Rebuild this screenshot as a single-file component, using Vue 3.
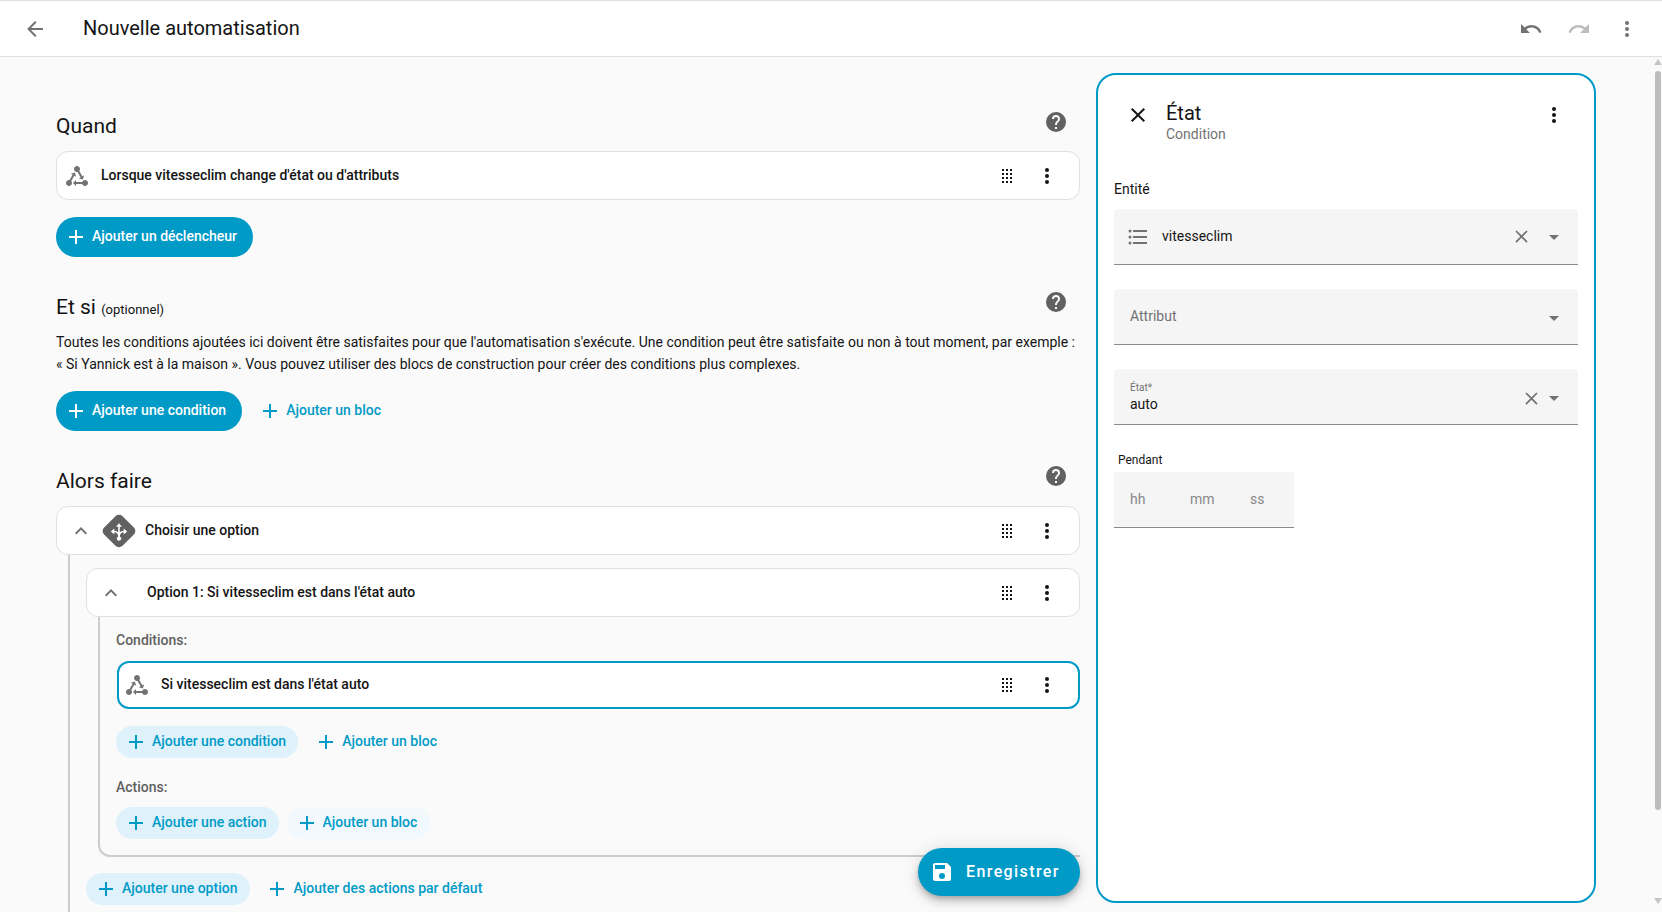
<script setup>
const p = {
  back: 'M20,11V13H8L13.5,18.5L12.08,19.92L4.16,12L12.08,4.08L13.5,5.5L8,11H20Z',
  undo: 'M12.5,8C9.85,8 7.45,9 5.6,10.6L2,7V16H11L7.38,12.38C8.77,11.22 10.54,10.5 12.5,10.5C16.04,10.5 19.05,12.81 20.1,16L22.47,15.22C21.08,11.03 17.15,8 12.5,8Z',
  redo: 'M18.4,10.6C16.55,9 14.15,8 11.5,8C6.85,8 2.92,11.03 1.54,15.22L3.9,16C4.95,12.81 7.95,10.5 11.5,10.5C13.45,10.5 15.23,11.22 16.62,12.38L13,16H22V7L18.4,10.6Z',
  dots: 'M12,16A2,2 0 0,1 14,18A2,2 0 0,1 12,20A2,2 0 0,1 10,18A2,2 0 0,1 12,16M12,10A2,2 0 0,1 14,12A2,2 0 0,1 12,14A2,2 0 0,1 10,12A2,2 0 0,1 12,10M12,4A2,2 0 0,1 14,6A2,2 0 0,1 12,8A2,2 0 0,1 10,6A2,2 0 0,1 12,4Z',
  help: 'M15.07,11.25L14.17,12.17C13.45,12.89 13,13.5 13,15H11V14.5C11,13.39 11.45,12.39 12.17,11.67L13.41,10.41C13.78,10.05 14,9.55 14,9C14,7.89 13.1,7 12,7A2,2 0 0,0 10,9H8A4,4 0 0,1 12,5A4,4 0 0,1 16,9C16,9.88 15.64,10.67 15.07,11.25M13,19H11V17H13M12,2A10,10 0 0,0 2,12A10,10 0 0,0 12,22A10,10 0 0,0 22,12C22,6.47 17.5,2 12,2Z',
  plus: 'M19,13H13V19H11V13H5V11H11V5H13V11H19V13Z',
  up: 'M7.41,15.41L12,10.83L16.59,15.41L18,14L12,8L6,14L7.41,15.41Z',
  close: 'M19,6.41L17.59,5L12,10.59L6.41,5L5,6.41L10.59,12L5,17.59L6.41,19L12,13.41L17.59,19L19,17.59L13.41,12L19,6.41Z',
  caret: 'M7,10L12,15L17,10H7Z',
  list: 'M7,5H21V7H7V5M7,13V11H21V13H7M4,4.5A1.5,1.5 0 0,1 5.5,6A1.5,1.5 0 0,1 4,7.5A1.5,1.5 0 0,1 2.5,6A1.5,1.5 0 0,1 4,4.5M4,10.5A1.5,1.5 0 0,1 5.5,12A1.5,1.5 0 0,1 4,13.5A1.5,1.5 0 0,1 2.5,12A1.5,1.5 0 0,1 4,10.5M7,19V17H21V19H7M4,16.5A1.5,1.5 0 0,1 5.5,18A1.5,1.5 0 0,1 4,19.5A1.5,1.5 0 0,1 2.5,18A1.5,1.5 0 0,1 4,16.5Z',
  state: 'M6.27 17.05C6.72 17.58 7 18.25 7 19C7 20.66 5.66 22 4 22S1 20.66 1 19 2.34 16 4 16C4.18 16 4.36 16 4.53 16.05L7.6 10.69L5.86 9.7L9.95 8.58L11.07 12.67L9.33 11.68L6.27 17.05M20 16C18.7 16 17.6 16.84 17.18 18H11V16L8 19L11 22V20H17.18C17.6 21.16 18.7 22 20 22C21.66 22 23 20.66 23 19S21.66 16 20 16M12 8C12.18 8 12.36 8 12.53 7.95L15.6 13.31L13.86 14.3L17.95 15.42L19.07 11.33L17.33 12.32L14.27 6.95C14.72 6.42 15 5.75 15 5C15 3.34 13.66 2 12 2S9 3.34 9 5 10.34 8 12 8Z',
  save: 'M15,9H5V5H15M12,19A3,3 0 0,1 9,16A3,3 0 0,1 12,13A3,3 0 0,1 15,16A3,3 0 0,1 12,19M17,3H5C3.89,3 3,3.9 3,5V19A2,2 0 0,0 5,21H19A2,2 0 0,0 21,19V7L17,3Z',
}
const dragDots = []
for (let r = 0; r < 4; r++) for (let c = 0; c < 3; c++) dragDots.push({ x: 7 + c * 4, y: 5 + r * 4 })
</script>

<template>
  <div class="page">
    <header class="topbar">
      <svg class="ic back" viewBox="0 0 24 24"><path :d="p.back" /></svg>
      <div class="title">Nouvelle automatisation</div>
      <svg class="ic undo" viewBox="0 0 24 24"><path :d="p.undo" /></svg>
      <svg class="ic redo" viewBox="0 0 24 24"><path :d="p.redo" /></svg>
      <svg class="ic more" viewBox="0 0 24 24"><path :d="p.dots" /></svg>
    </header>

    <div class="body">
      <main class="main">
        <div class="head h1">
          <h2>Quand</h2>
          <svg class="ic help hp1" viewBox="0 0 24 24"><path :d="p.help" /></svg>
        </div>
        <div class="card">
          <svg class="ic state" viewBox="0 0 24 24"><path :d="p.state" /></svg>
          <span class="card-text t-a">Lorsque vitesseclim change d'état ou d'attributs</span>
          <svg class="ic drag" viewBox="0 0 24 24"><rect v-for="(d, i) in dragDots" :key="i" :x="d.x" :y="d.y" width="2" height="2" /></svg>
          <svg class="ic dots" viewBox="0 0 24 24"><path :d="p.dots" /></svg>
        </div>
        <div class="row r1">
          <button class="btn solid"><svg viewBox="0 0 24 24"><path :d="p.plus" /></svg><span>Ajouter un déclencheur</span></button>
        </div>

        <div class="head h2">
          <h2>Et si <small>(optionnel)</small></h2>
          <svg class="ic help hp2" viewBox="0 0 24 24"><path :d="p.help" /></svg>
        </div>
        <p class="desc">Toutes les conditions ajoutées ici doivent être satisfaites pour que l'automatisation s'exécute. Une condition peut être satisfaite ou non à tout moment, par exemple : « Si Yannick est à la maison ». Vous pouvez utiliser des blocs de construction pour créer des conditions plus complexes.</p>
        <div class="row r2">
          <button class="btn solid"><svg viewBox="0 0 24 24"><path :d="p.plus" /></svg><span>Ajouter une condition</span></button>
          <button class="btn plain tall"><svg viewBox="0 0 24 24"><path :d="p.plus" /></svg><span>Ajouter un bloc</span></button>
        </div>

        <div class="head h3">
          <h2>Alors faire</h2>
          <svg class="ic help hp3" viewBox="0 0 24 24"><path :d="p.help" /></svg>
        </div>
        <div class="card">
          <svg class="ic chev" viewBox="0 0 24 24"><path :d="p.up" /></svg>
          <span class="choose">
            <svg viewBox="0 0 36 36">
              <rect x="5" y="5" width="26" height="26" rx="5" transform="rotate(45 18 18)" fill="#616161" />
              <path d="M18 26V13M18 24C18 20.5 16 18.5 13 18.5M18 24C18 20.5 20 18.5 23 18.5" fill="none" stroke="#fff" stroke-width="1.6" />
              <circle cx="18" cy="25.6" r="2.2" fill="#fff" />
              <path d="M18 10.2l3 3.5h-6zM9.8 18.5l3.5-3v6zM26.2 18.5l-3.5-3v6z" fill="#fff" />
            </svg>
          </span>
          <span class="card-text t-b">Choisir une option</span>
          <svg class="ic drag" viewBox="0 0 24 24"><rect v-for="(d, i) in dragDots" :key="i" :x="d.x" :y="d.y" width="2" height="2" /></svg>
          <svg class="ic dots" viewBox="0 0 24 24"><path :d="p.dots" /></svg>
        </div>

        <div class="choose-body">
          <div class="card option">
            <svg class="ic chev" viewBox="0 0 24 24"><path :d="p.up" /></svg>
            <span class="card-text t-c">Option 1: Si vitesseclim est dans l'état auto</span>
            <svg class="ic drag" viewBox="0 0 24 24"><rect v-for="(d, i) in dragDots" :key="i" :x="d.x" :y="d.y" width="2" height="2" /></svg>
            <svg class="ic dots" viewBox="0 0 24 24"><path :d="p.dots" /></svg>
          </div>
          <div class="option-body">
            <div class="sub-label l1">Conditions:</div>
            <div class="card selected">
              <svg class="ic state" viewBox="0 0 24 24"><path :d="p.state" /></svg>
              <span class="card-text t-d">Si vitesseclim est dans l'état auto</span>
              <svg class="ic drag" viewBox="0 0 24 24"><rect v-for="(d, i) in dragDots" :key="i" :x="d.x" :y="d.y" width="2" height="2" /></svg>
              <svg class="ic dots" viewBox="0 0 24 24"><path :d="p.dots" /></svg>
            </div>
            <div class="row r3">
              <button class="btn soft"><svg viewBox="0 0 24 24"><path :d="p.plus" /></svg><span>Ajouter une condition</span></button>
              <button class="btn plain"><svg viewBox="0 0 24 24"><path :d="p.plus" /></svg><span>Ajouter un bloc</span></button>
            </div>
            <div class="sub-label l2">Actions:</div>
            <div class="row r4">
              <button class="btn soft"><svg viewBox="0 0 24 24"><path :d="p.plus" /></svg><span>Ajouter une action</span></button>
              <button class="btn softer"><svg viewBox="0 0 24 24"><path :d="p.plus" /></svg><span>Ajouter un bloc</span></button>
            </div>
          </div>
          <div class="row r5">
            <button class="btn soft"><svg viewBox="0 0 24 24"><path :d="p.plus" /></svg><span>Ajouter une option</span></button>
            <button class="btn plain"><svg viewBox="0 0 24 24"><path :d="p.plus" /></svg><span>Ajouter des actions par défaut</span></button>
          </div>
        </div>
      </main>

      <aside class="panel">
        <div class="panel-head">
          <svg class="ic p-close" viewBox="0 0 24 24"><path :d="p.close" /></svg>
          <div class="panel-title">
            <div class="pt">État</div>
            <div class="ps">Condition</div>
          </div>
          <svg class="ic p-more" viewBox="0 0 24 24"><path :d="p.dots" /></svg>
        </div>

        <div class="f-label entite">Entité</div>
        <div class="field">
          <svg class="ic f-list" viewBox="0 0 24 24"><path :d="p.list" /></svg>
          <span class="f-value">vitesseclim</span>
          <svg class="ic f-x" viewBox="0 0 24 24"><path :d="p.close" /></svg>
          <svg class="ic f-caret" viewBox="0 0 24 24"><path :d="p.caret" /></svg>
        </div>

        <div class="field attr">
          <span class="f-placeholder">Attribut</span>
          <svg class="ic f-caret c1" viewBox="0 0 24 24"><path :d="p.caret" /></svg>
        </div>

        <div class="field etat">
          <div class="f-stack">
            <span class="f-float">État*</span>
            <span class="f-auto">auto</span>
          </div>
          <svg class="ic f-x x2" viewBox="0 0 24 24"><path :d="p.close" /></svg>
          <svg class="ic f-caret c2" viewBox="0 0 24 24"><path :d="p.caret" /></svg>
        </div>

        <div class="f-label pendant">Pendant</div>
        <div class="field duration">
          <span class="d-h">hh</span>
          <span class="d-m">mm</span>
          <span class="d-s">ss</span>
        </div>
      </aside>
    </div>

    <button class="fab">
      <svg viewBox="0 0 24 24"><path :d="p.save" /></svg>
      <span>Enregistrer</span>
    </button>

    <div class="scrollbar">
      <span class="sb-up"></span>
      <span class="sb-thumb"></span>
      <span class="sb-down"></span>
    </div>
  </div>
</template>

<style>
html, body { margin: 0; background: #fafafa; overflow: hidden; }
</style>

<style scoped>
.page {
  position: relative;
  width: 1662px;
  height: 912px;
  overflow: hidden;
  display: flex;
  flex-direction: column;
  background: #fafafa;
  color: #141414;
  font-family: Roboto, "Liberation Sans", sans-serif;
  font-size: 14px;
}
.ic { width: 24px; height: 24px; flex: none; display: block; fill: #727272; }

.topbar {
  flex: none;
  box-sizing: border-box;
  height: 57px;
  display: flex;
  align-items: center;
  background: #fff;
  border-top: 1px solid #e0e0e0;
  border-bottom: 1px solid #e0e0e0;
}
.back { margin-left: 23px; }
.title { margin-left: 36px; font-size: 20px; flex: 1; line-height: 24px; padding-bottom: 2px; }
.undo { margin-right: 24px; }
.redo { margin-right: 24px; fill: #bdbdbd; }
.more { margin-right: 23px; }

.body { flex: 1; min-height: 0; display: flex; align-items: flex-start; }
.main {
  box-sizing: border-box;
  width: 1080px;
  height: 855px;
  padding-left: 56px;
  overflow: hidden;
  flex: none;
}
.head { display: flex; align-items: center; justify-content: space-between; padding-right: 12px; }
.head h2 { margin: 0; font-weight: 400; font-size: 21px; line-height: 28px; }
.head small { font-size: 13px; }
.help { fill: #616161; }
.hp1 { margin-top: -8px; }
.hp2 { margin-top: -12px; }
.hp3 { margin-top: -6px; }
.h1 { margin-top: 51px; height: 35px; }
.h2 { margin-top: 34px; height: 34px; }
.h3 { margin-top: 30px; height: 36px; }
.h3 h2 { padding-top: 4px; }

.card {
  box-sizing: border-box;
  height: 49px;
  display: flex;
  align-items: center;
  background: #fff;
  border: 1px solid #e0e0e0;
  border-radius: 12px;
}
.h1 + .card { margin-top: 8px; }
.h3 + .card { margin-top: 9px; }
.card-text { flex: 1; font-weight: 500; font-size: 14px; padding-bottom: 2px; }
.state { margin-left: 8px; }
.t-a { margin-left: 12px; }
.t-b { margin-left: 8px; }
.t-c { margin-left: 24px; }
.t-d { margin-left: 12px; }
.drag { margin-right: 16px; fill: #141414; }
.dots { margin-right: 20px; fill: #141414; }

.chev { margin-left: 12px; }
.choose { width: 36px; height: 36px; margin-left: 8px; flex: none; }
.choose svg { display: block; width: 36px; height: 36px; }

.row { display: flex; align-items: center; }
.r1 { margin-top: 17px; }
.r2 { margin-top: 16px; }
.r3 { margin-top: 17px; }
.r4 { margin-top: 11px; }
.r5 { margin-top: 16px; }

.btn {
  box-sizing: border-box;
  height: 32px;
  display: inline-flex;
  align-items: center;
  gap: 4px;
  padding: 0 12px 0 8px;
  border: 0;
  border-radius: 16px;
  font: 500 14px Roboto, sans-serif;
  color: #009ac7;
  background: transparent;
  white-space: nowrap;
}
.btn span { padding-bottom: 2px; }
.btn svg { width: 24px; height: 24px; flex: none; fill: currentColor; }
.solid { height: 40px; border-radius: 20px; background: #009ac7; color: #fff; padding: 0 16px 0 8px; }
.soft { background: #dff2fb; }
.r5 .soft { padding-right: 13px; }
.softer { background: #f1f9fe; margin-left: 8px; padding-right: 13px; }
.plain { margin-left: 8px; }
.r5 .plain { margin-left: 7px; }
.tall { height: 40px; }

.desc { margin: 6px 0 0; padding: 0; line-height: 22px; font-size: 14px; }

.choose-body {
  margin-left: 12px;
  border-left: 2px solid #ccc;
  padding-left: 16px;
  padding-top: 13px;
  height: 360px;
}
.option-body {
  margin-left: 12px;
  box-sizing: border-box;
  height: 240px;
  border-left: 2px solid #ccc;
  border-bottom: 2px solid #ccc;
  border-bottom-left-radius: 12px;
  padding-left: 16px;
}
.sub-label { font-weight: 500; font-size: 14px; color: #616161; line-height: 18px; }
.l1 { padding-top: 14px; }
.l2 { margin-top: 20px; }
.selected { height: 48px; margin-top: 12px; margin-left: 1px; border: 2px solid #009ac7; }
.selected .state { margin-left: 6px; }
.selected .dots { margin-right: 19px; }

.panel {
  box-sizing: border-box;
  width: 500px;
  height: 830px;
  margin-top: 16px;
  margin-left: 16px;
  flex: none;
  background: #fff;
  border: 2px solid #009ac7;
  border-radius: 20px;
  padding: 0 16px;
}
.panel-head { display: flex; align-items: flex-start; height: 90px; }
.p-close { fill: #141414; margin: 28px 0 0 12px; }
.panel-title { margin: 25px 0 0 16px; flex: 1; }
.pt { font-size: 20px; line-height: 26px; }
.ps { color: #727272; font-size: 14px; line-height: 18px; margin-top: -1px; }
.p-more { fill: #141414; margin: 28px 12px 0 0; }
.f-label { font-size: 14px; line-height: 18px; }
.entite { margin-top: 15px; }
.field {
  box-sizing: border-box;
  height: 56px;
  display: flex;
  align-items: center;
  background: #f5f5f5;
  border-bottom: 1px solid #8a8a8a;
  border-radius: 4px 4px 0 0;
  margin-top: 11px;
  color: #141414;
}
.f-list { margin-left: 12px; }
.f-value { margin-left: 12px; flex: 1; padding-bottom: 2px; }
.f-x { width: 21px; height: 21px; margin-right: 10px; }
.f-caret { margin-right: 12px; }
.c1 { margin-top: 2px; }
.attr { margin-top: 24px; }
.f-placeholder { margin-left: 16px; flex: 1; color: #727272; padding-bottom: 2px; }
.etat { margin-top: 24px; }
.f-stack { flex: 1; margin-left: 16px; display: flex; flex-direction: column; margin-top: 2px; }
.f-float { font-size: 10px; line-height: 12px; color: #727272; }
.f-auto { font-size: 14px; line-height: 20px; }
.x2 { margin-right: 0; margin-top: 4px; }
.c2 { margin-top: 3px; }
.pendant { margin-top: 26px; margin-left: 4px; font-size: 12px; }
.duration { width: 180px; margin-top: 3px; border-radius: 0; color: #888; }
.d-h { margin-left: 16px; width: 60px; padding-bottom: 2px; }
.d-m { width: 60px; padding-bottom: 2px; }
.d-s { width: 40px; padding-bottom: 2px; }

.fab {
  position: absolute;
  left: 918px;
  top: 848px;
  box-sizing: border-box;
  width: 162px;
  height: 48px;
  border: 0;
  border-radius: 24px;
  display: flex;
  align-items: center;
  padding: 0 0 0 12px;
  gap: 12px;
  background: #009ac7;
  color: #fff;
  font: 500 16px Roboto, sans-serif;
  letter-spacing: 1.4px;
  box-shadow: 0 3px 5px -1px rgba(0,0,0,.2), 0 6px 10px 0 rgba(0,0,0,.14), 0 1px 18px 0 rgba(0,0,0,.12);
}
.fab span { padding-bottom: 2px; }
.fab svg { width: 24px; height: 24px; fill: #fff; flex: none; }

.scrollbar { position: absolute; right: 0; top: 57px; bottom: 0; width: 8px; display: flex; flex-direction: column; align-items: center; }
.sb-up { margin-top: 2px; width: 0; height: 0; border: 4px solid transparent; border-top: 0; border-bottom: 6px solid #c4c4c4; }
.sb-thumb { margin-top: 6px; width: 6px; height: 739px; background: #bdbdbd; border-radius: 3px; }
.sb-down { margin-top: 88px; width: 0; height: 0; border: 4px solid transparent; border-bottom: 0; border-top: 6px solid #c4c4c4; }
</style>
